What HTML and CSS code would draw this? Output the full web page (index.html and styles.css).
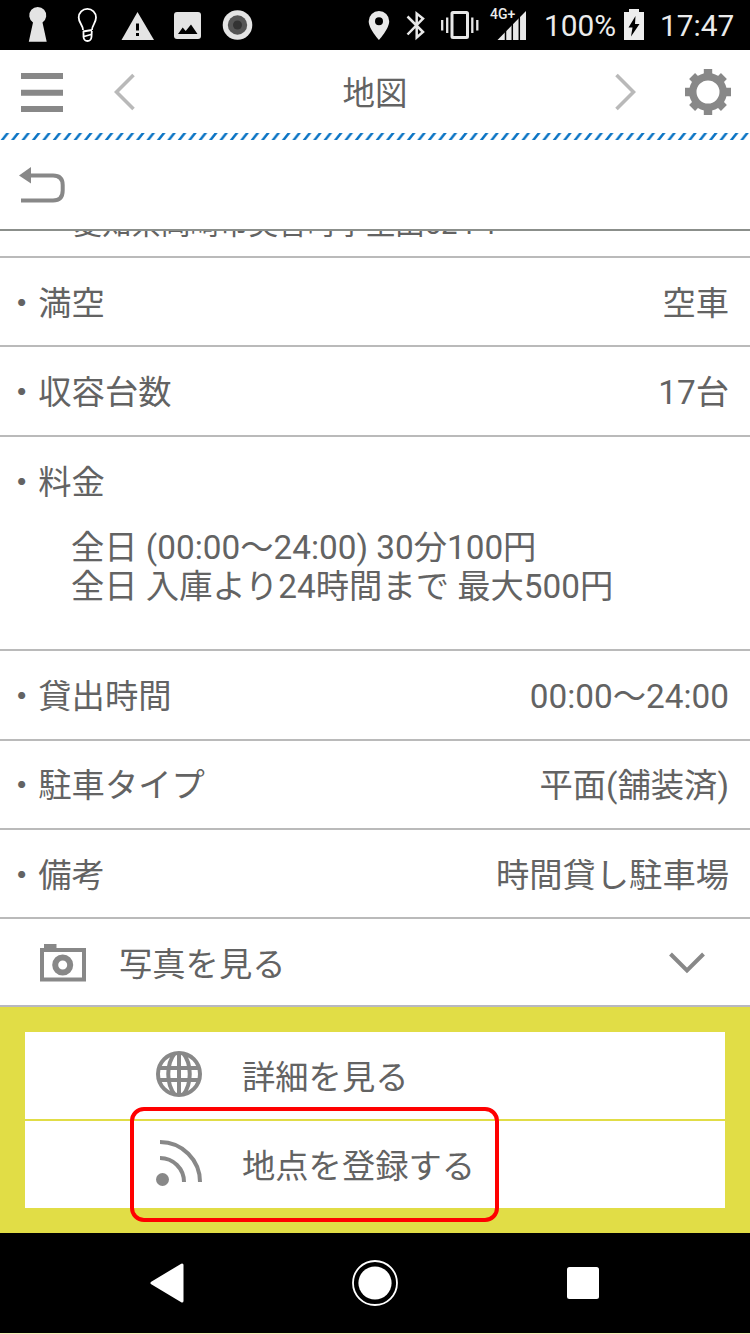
FILE: index.html
```html
<!DOCTYPE html>
<html lang="ja">
<head>
<meta charset="utf-8">
<title>地図</title>
<link rel="stylesheet" href="styles.css">
</head>
<body>
<div class="screen">
  <div class="status">
    <svg class="status-left" width="270" height="50" viewBox="0 0 270 50">
      <g fill="#e4e4e4">
        <path d="M33 22.500A8.500 8.500 0 1 1 42.500 22.500L46.700 41.700H28.800Z"/>
        <path d="M137.500 12L154 40H121.500Z"/>
        <rect x="174" y="12" width="27" height="27" rx="3"/>
        <circle cx="237.500" cy="25" r="14.800"/>
      </g>
      <path d="M83 30C83 25 78.700 23 78.700 17.500A8.600 8.600 0 0 1 96 17.500C96 23 92 25 92 30M83 31.500L92 30M83.500 31V37Q84 41 87.500 41T91.500 37L91.800 31M84 36.500L91 34.500" fill="none" stroke="#fff" stroke-width="1.800"/>
      <path d="M136 23.500h3v7h-3zM136 33h3v3h-3zM178 34L182.700 27.500L185.700 31L191 24.500L197.500 34Z" fill="#000"/>
      <circle cx="237.500" cy="25" r="9.700" fill="#555"/><circle cx="237.500" cy="25" r="4.500" fill="#333"/>
    </svg>
    <svg class="status-right" width="170" height="50" viewBox="360 0 170 50">
      <path d="M379 11A10.200 10.200 0 0 0 368.700 21.300C368.700 29 379 40 379 40S389.200 29 389.200 21.300A10.200 10.200 0 0 0 379 11ZM379 17.200A4 4 0 1 1 379 25.200A4 4 0 0 1 379 17.200Z" fill="#e8e8e8" fill-rule="evenodd"/>
      <path d="M407.500 16.500L423 32L416.700 37.500V13.500L423 18.500L407.500 34.500" fill="none" stroke="#e8e8e8" stroke-width="2.500"/>
      <g fill="none" stroke="#e8e8e8"><rect x="452" y="12.500" width="15.500" height="25" rx="1" stroke-width="3"/><path d="M442.200 20V30.500M447.200 17.500V33M472.300 17.500V33M477.300 20V30.500" stroke-width="2.300"/></g>
      <path d="M497.500 40L526 11V40Z" fill="#e8e8e8"/>
      <path d="M505.500 26V40M512.300 18V40M519.300 12V40" stroke="#000" stroke-width="1.500"/>
      <text x="490" y="19" class="net">4G+</text>
    </svg>
    <span class="percent">100%</span>
    <svg class="battery" width="20" height="32" viewBox="0 0 20 32"><path d="M0 3H5V0H15V3H20V31H0Z" fill="#eee"/><path d="M11.500 7L4.500 18.500H8.500L7 27.500L15.500 15H11Z" fill="#000"/></svg>
    <span class="clock">17:47</span>
  </div>

  <div class="header">
    <svg class="menu" width="42" height="40" viewBox="0 0 42 40"><path d="M0 4H42M0 20.700H42M0 37H42" stroke="#888" stroke-width="6"/></svg>
    <svg class="prev" width="22" height="38" viewBox="0 0 22 38"><path d="M19.500 2L2.500 19L19.500 36" fill="none" stroke="#b9b9b9" stroke-width="3.600"/></svg>
    <h1 class="title">地図</h1>
    <svg class="next" width="22" height="38" viewBox="0 0 22 38"><path d="M2.500 2L19.500 19L2.500 36" fill="none" stroke="#b9b9b9" stroke-width="3.600"/></svg>
    <svg class="gear" width="46" height="46" viewBox="-23 -23 46 46">
      <circle r="15.200" fill="none" stroke="#888" stroke-width="7.400"/>
      <g fill="#888"><path d="M-4.200 -23H4.200V-16H-4.200ZM-4.200 16H4.200V23H-4.200ZM-23 -4.200V4.200H-16V-4.200ZM16 -4.200V4.200H23V-4.200Z"/><path transform="rotate(45)" d="M-4.200 -22.500H4.200V-16H-4.200ZM-4.200 16H4.200V22.500H-4.200ZM-22.500 -4.200V4.200H-16V-4.200ZM16 -4.200V4.200H22.500V-4.200Z"/></g>
    </svg>
  </div>
  <svg class="hatch" width="750" height="7">
    <defs><pattern id="slashes" width="10.417" height="7" patternUnits="userSpaceOnUse"><path d="M0.600 7L6.100 0H9.300L3.800 7Z" fill="#0b74c4"/></pattern></defs>
    <rect width="750" height="7" fill="url(#slashes)"/>
  </svg>
  <div class="backbar">
    <svg width="47" height="37" viewBox="0 0 47 37"><path d="M0 8.500L12 0V16.500Z" fill="#888"/><path d="M11 8.500H34Q43.700 8.500 43.700 18V23.500Q43.700 33.500 34 33.500H2" fill="none" stroke="#888" stroke-width="4"/></svg>
  </div>

  <div class="details">
    <div class="address"><span>愛知県岡崎市美合町字生田524-1</span></div>
    <div class="row"><span>・満空</span><span>空車</span></div>
    <div class="row"><span>・収容台数</span><span>17台</span></div>
    <div class="fee">
      <div class="fee-label">・料金</div>
      <div class="fee-text">全日 (00:00〜24:00) 30分100円<br>全日 入庫より24時間まで 最大500円</div>
    </div>
    <div class="row"><span>・貸出時間</span><span>00:00〜24:00</span></div>
    <div class="row"><span>・駐車タイプ</span><span>平面(舗装済)</span></div>
    <div class="row"><span>・備考</span><span>時間貸し駐車場</span></div>
    <div class="photo">
      <svg width="46" height="38" viewBox="0 0 46 38"><path d="M4 0H16.500V5H4Z" fill="#888"/><rect x="2" y="6" width="42" height="29.500" fill="none" stroke="#888" stroke-width="4"/><circle cx="22.700" cy="21" r="7.500" fill="none" stroke="#888" stroke-width="6"/></svg>
      <span class="photo-label">写真を見る</span>
      <svg class="chevron" width="36" height="22" viewBox="0 0 36 22"><path d="M1.500 2L18 18.500L34.500 2" fill="none" stroke="#888" stroke-width="4"/></svg>
    </div>
  </div>

  <div class="actions">
    <div class="action">
      <svg width="46" height="46" viewBox="-23 -23 46 46"><g fill="none" stroke="#888" stroke-width="4"><circle r="21"/><path d="M0 -21V21M-20 -6H20M-20 6H20"/><path d="M-4 -21C-13 -10 -13 10 -4 21M4 -21C13 -10 13 10 4 21"/></g></svg>
      <span>詳細を見る</span>
    </div>
    <div class="action">
      <svg width="46" height="46" viewBox="0 0 46 46"><circle cx="6.500" cy="39.500" r="6.500" fill="#888"/><path d="M4 18A24 24 0 0 1 28 42M4 2A40 40 0 0 1 44 42" fill="none" stroke="#888" stroke-width="4"/></svg>
      <span>地点を登録する</span>
    </div>
    <div class="highlight"></div>
  </div>

  <div class="navbar">
    <svg width="34" height="40" viewBox="0 0 34 40"><path d="M2 20L32 2V38Z" fill="#fff" stroke="#fff" stroke-width="3" stroke-linejoin="round"/></svg>
    <svg class="home" width="46" height="46" viewBox="-23 -23 46 46"><circle r="22" fill="none" stroke="#fff" stroke-width="1.800"/><circle r="16.600" fill="#fff"/></svg>
    <svg width="32" height="32"><rect width="32" height="32" rx="2.500" fill="#fff"/></svg>
  </div>
</div>
</body>
</html>
```
FILE: styles.css
```css
* { box-sizing: border-box; }
body {
  margin: 0;
  background: #fff;
  color: #636363;
  font-family: Roboto, "Noto Sans CJK JP", sans-serif;
  font-size: 33.3px;
}
svg { display: block; flex: none; }
.screen {
  width: 750px;
  height: 1334px;
  display: flex;
  flex-direction: column;
  overflow: hidden;
  border-bottom: 1px solid #f2eeb4;
}
.status {
  height: 50px;
  flex: none;
  background: #000;
  color: #ebebeb;
  display: flex;
  align-items: center;
  white-space: nowrap;
}
.status-right { margin-left: 90px; }
.net { font: 500 14px Roboto, sans-serif; fill: #ebebeb; }
.percent { margin-left: 14px; width: 80px; font-size: 29.800px; line-height: 50px; padding-top: 2px; }
.clock { margin-left: 16px; font-size: 29.800px; line-height: 50px; padding-top: 2px; }

.header { height: 83px; flex: none; display: flex; align-items: center; padding: 1px 19px 0 21px; }
.prev { margin-left: 51px; }
.title { margin: 0; width: 480px; font-size: 32.5px; font-weight: 400; line-height: 82px; text-align: center; padding: 3px 2px 0 0; }
.next { margin-left: -2px; }
.gear { margin-left: auto; }
.hatch { flex: none; }
.backbar { height: 91px; flex: none; padding: 27px 0 0 19px; border-bottom: 2px solid #8b8f8b; }

.details { flex: none; }
.address {
  height: 27px;
  display: flex;
  align-items: flex-end;
  padding: 0 0 14px 73px;
  overflow: hidden;
  font-size: 29.300px;
  line-height: 36px;
  border-bottom: 2px solid #bababa;
}
.row {
  height: 89.400px;
  display: flex;
  align-items: center;
  justify-content: space-between;
  padding: 4px 21px 0 5px;
  line-height: 40px;
  border-bottom: 2px solid #bababa;
}
.fee { height: 214.500px; border-bottom: 2px solid #bababa; padding-left: 5px; }
.fee-label { line-height: 91px; }
.fee-text { margin: 0 0 0 66px; line-height: 39.500px; white-space: nowrap; }
.photo { height: 88px; display: flex; align-items: center; padding: 2px 45px 0 40px; border-bottom: 2px solid #b8b8c0; }
.photo-label { margin-left: 33px; margin-top: -3px; }
.chevron { margin-left: auto; }

.actions {
  position: relative;
  height: 226px;
  flex: none;
  background: #e1dd46;
  padding: 25px;
  display: flex;
  flex-direction: column;
  gap: 2px;
}
.action { flex: 1; background: #fff; display: flex; align-items: center; gap: 40px; padding: 0 0 3px 131px; }
.action span { padding-top: 1px; }
.highlight {
  position: absolute;
  left: 130px;
  top: 100px;
  width: 369px;
  height: 115px;
  border: 4px solid #f00;
  border-radius: 14px;
}
.navbar {
  flex: 1;
  background: #000;
  display: flex;
  align-items: center;
  justify-content: space-between;
  padding: 0 151px 0 150px;
}
.home { margin-right: 2px; }
```
